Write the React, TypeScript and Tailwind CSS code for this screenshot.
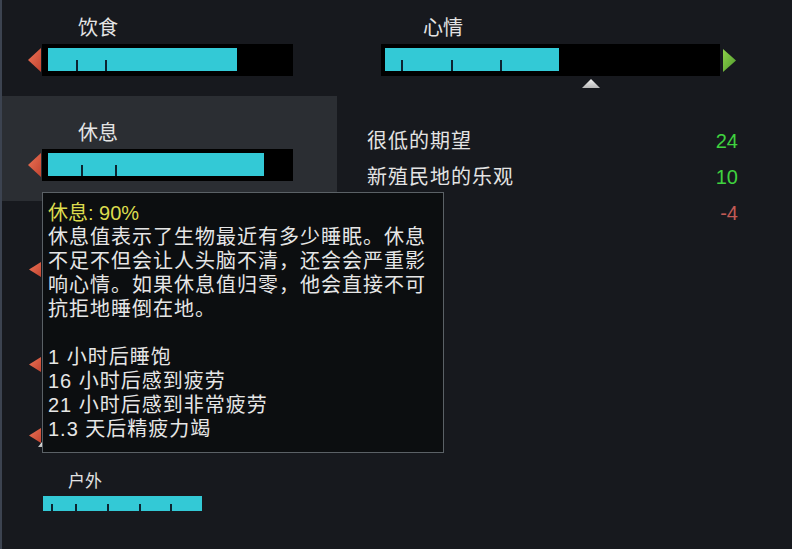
import React from "react";

const CYAN = "#33c9d6";

type Tick = number;

function LeftArrow({ w = 13, h = 24 }: { w?: number; h?: number }) {
  return (
    <svg width={w} height={h} viewBox={`0 0 ${w} ${h}`} className="shrink-0">
      <defs>
        <linearGradient id={`ra${h}`} x1="0" y1="0" x2="1" y2="1">
          <stop offset="0" stopColor="#ee7456" />
          <stop offset="1" stopColor="#c24431" />
        </linearGradient>
      </defs>
      <polygon points={`${w},0 0,${h / 2} ${w},${h}`} fill={`url(#ra${h})`} />
    </svg>
  );
}

function RightArrow() {
  return (
    <svg width={13} height={23} viewBox="0 0 13 23" className="shrink-0">
      <defs>
        <linearGradient id="ga" x1="0" y1="0" x2="1" y2="1">
          <stop offset="0" stopColor="#8fd24a" />
          <stop offset="1" stopColor="#4f9a2e" />
        </linearGradient>
      </defs>
      <polygon points="0,0 13,11.5 0,23" fill="url(#ga)" />
    </svg>
  );
}

function UpMarker({ w = 18, h = 9 }: { w?: number; h?: number }) {
  return (
    <svg width={w} height={h} viewBox={`0 0 ${w} ${h}`}>
      <defs>
        <linearGradient id={`wm${w}`} x1="0" y1="0" x2="0" y2="1">
          <stop offset="0" stopColor="#f2f2f2" />
          <stop offset="1" stopColor="#b8b8b8" />
        </linearGradient>
      </defs>
      <polygon points={`${w / 2},0 ${w},${h} 0,${h}`} fill={`url(#wm${w})`} />
    </svg>
  );
}

function Ticks({ ticks, h }: { ticks: Tick[]; h: string }) {
  return (
    <>
      {ticks.map((t) => (
        <span
          key={t}
          className={`absolute bottom-0 w-[2px] bg-[#0c2430] ${h}`}
          style={{ left: t }}
        />
      ))}
    </>
  );
}

function BigBar({ fill, ticks }: { fill: number; ticks: Tick[] }) {
  return (
    <div className="w-[251px] h-[32px] bg-black pl-[6px] pt-[4px] pb-[5px]">
      <div className="relative h-full w-[240px]">
        <div className="h-full" style={{ width: fill, background: CYAN }} />
        <Ticks ticks={ticks} h="h-[11px]" />
      </div>
    </div>
  );
}

function BigNeed({
  label,
  fill,
  ticks,
  className,
}: {
  label: string;
  fill: number;
  ticks: Tick[];
  className: string;
}) {
  return (
    <div className={className}>
      <div className="pl-[76px] h-[24px] leading-[24px] text-[20px] text-[#e4e4e4]">{label}</div>
      <div className="mt-[4px] flex items-center pl-[26px] gap-[1px]">
        <LeftArrow />
        <BigBar fill={fill} ticks={ticks} />
      </div>
    </div>
  );
}

// rows partly covered by the tooltip: label is hidden, only arrow shows
function SmallNeed({
  label,
  fill,
  ticks,
  arrow,
  marker,
  className,
}: {
  label?: string;
  fill: number;
  ticks: Tick[];
  arrow?: boolean;
  marker?: boolean;
  className: string;
}) {
  return (
    <div className={className}>
      <div className="pl-[66px] h-[22px] leading-[22px] text-[17px] text-[#e4e4e4]">{label}</div>
      <div className="mt-[3px] flex items-center pl-[27px] gap-[2px]">
        <div className="w-[12px] shrink-0">{arrow && <LeftArrow w={12} h={15} />}</div>
        <div className="relative w-[159px] h-[15px]">
          <div className="h-full" style={{ width: fill, background: CYAN }} />
          <Ticks ticks={ticks} h="h-[7px]" />
          {marker && (
            <div className="absolute left-[-5px] top-[14px]">
              <UpMarker w={8} h={5} />
            </div>
          )}
        </div>
      </div>
    </div>
  );
}

const thoughts = [
  { label: "很低的期望", value: "24", color: "text-[#3fd23f]" },
  { label: "新殖民地的乐观", value: "10", color: "text-[#3fd23f]" },
  { label: "", value: "-4", color: "text-[#c25a55]" },
];

const tooltipLines = [
  "休息值表示了生物最近有多少睡眠。休息",
  "不足不但会让人头脑不清，还会会严重影",
  "响心情。如果休息值归零，他会直接不可",
  "抗拒地睡倒在地。",
  "",
  "1 小时后睡饱",
  "16 小时后感到疲劳",
  "21 小时后感到非常疲劳",
  "1.3 天后精疲力竭",
];

export default function App() {
  return (
    <div className="relative w-[792px] h-[549px] overflow-hidden bg-[#17191e] border-l-2 border-[#3c4350] font-['Liberation_Sans','Noto_Sans_CJK_SC',sans-serif] flex">
      {/* needs column */}
      <div className="w-[335px] shrink-0 flex flex-col">
        <BigNeed label="饮食" fill={189} ticks={[28, 57]} className="h-[96px] pt-[16px]" />
        <BigNeed
          label="休息"
          fill={216}
          ticks={[33, 67]}
          className="h-[105px] pt-[25px] bg-[#2b2e33]"
        />
        <SmallNeed fill={120} ticks={[8, 32]} arrow className="mt-[36px]" />
        <SmallNeed fill={90} ticks={[8, 40]} arrow className="mt-[55px]" />
        <SmallNeed fill={100} ticks={[8, 50]} arrow marker className="mt-[31px]" />
        <SmallNeed label="户外" fill={159} ticks={[8, 32, 64, 96, 127]} className="mt-[28px]" />
      </div>

      {/* mood column */}
      <div className="flex-1 flex flex-col pt-[16px]">
        <div className="pl-[86px] h-[24px] leading-[24px] text-[20px] text-[#e4e4e4]">心情</div>
        <div className="mt-[4px] pl-[44px] flex items-center gap-[3px]">
          <div className="w-[339px] h-[32px] bg-black pl-[4px] pt-[4px] pb-[5px]">
            <div className="relative h-full w-[331px]">
              <div className="h-full" style={{ width: 174, background: CYAN }} />
              <Ticks ticks={[16, 66, 115]} h="h-[11px]" />
            </div>
          </div>
          <RightArrow />
        </div>
        <div className="mt-[3px] pl-[245px] h-[9px] flex">
          <UpMarker />
        </div>
        <div className="mt-[35px] pl-[30px] pr-[54px] flex flex-col">
          {thoughts.map((t, i) => (
            <div key={i} className="h-[36px] flex items-center justify-between text-[20px]">
              <span className="tracking-[1px] text-[#e4e4e4]">{t.label}</span>
              <span className={t.color}>{t.value}</span>
            </div>
          ))}
        </div>
      </div>

      {/* tooltip */}
      <div className="absolute left-[40px] top-[192px] w-[402px] h-[261px] bg-[#0c0e10] border border-[#5b6166] pl-[5px] pt-[8px] text-[20px] leading-[24px] tracking-[1px] whitespace-nowrap">
        <div className="text-[#dcdc4e] tracking-[0px]">休息: 90%</div>
        {tooltipLines.map((l, i) => (
          <div key={i} className="h-[24px] text-[#e6e6e6]">
            {l}
          </div>
        ))}
      </div>
    </div>
  );
}
